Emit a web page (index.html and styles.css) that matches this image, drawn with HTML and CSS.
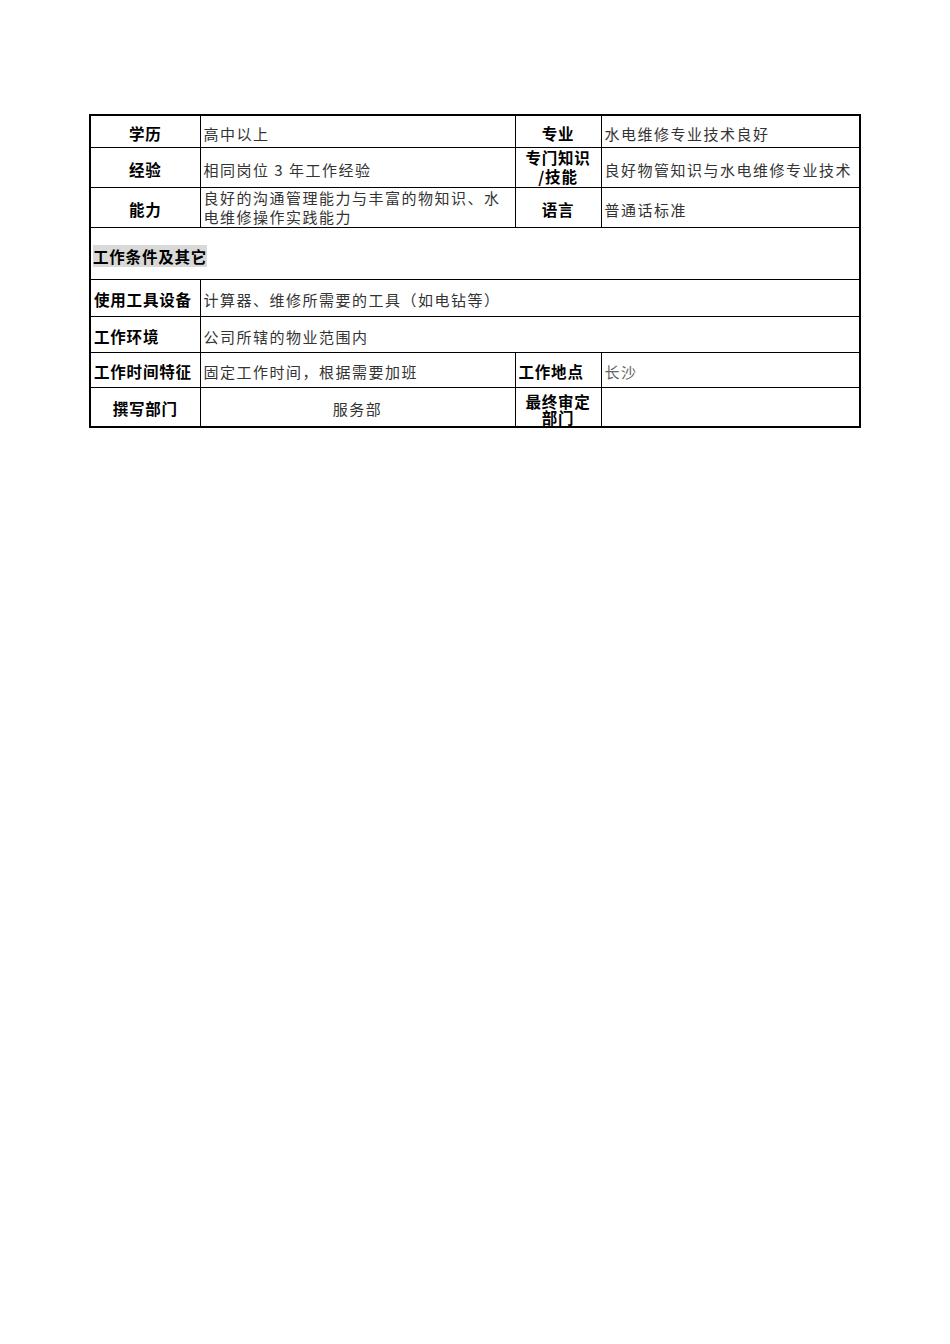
FILE: index.html
```html
<!DOCTYPE html>
<html lang="zh-CN">
<head>
<meta charset="utf-8">
<title>岗位说明书</title>
<link rel="stylesheet" href="styles.css">
</head>
<body>
<table class="sheet">
  <colgroup>
    <col class="c1"><col class="c2"><col class="c3"><col class="c4">
  </colgroup>
  <tr class="r1">
    <th class="lab center">学历</th>
    <td class="val">高中以上</td>
    <th class="lab center">专业</th>
    <td class="val">水电维修专业技术良好</td>
  </tr>
  <tr class="r2">
    <th class="lab center">经验</th>
    <td class="val">相同岗位 3 年工作经验</td>
    <th class="lab center two">专门知识<br>/技能</th>
    <td class="val">良好物管知识与水电维修专业技术</td>
  </tr>
  <tr class="r3">
    <th class="lab center">能力</th>
    <td class="val two">良好的沟通管理能力与丰富的物知识、水<br>电维修操作实践能力</td>
    <th class="lab center">语言</th>
    <td class="val">普通话标准</td>
  </tr>
  <tr class="r4">
    <th class="lab section" colspan="4"><span class="mark">工作条件及其它</span></th>
  </tr>
  <tr class="r5">
    <th class="lab">使用工具设备</th>
    <td class="val" colspan="3">计算器、维修所需要的工具（如电钻等）</td>
  </tr>
  <tr class="r6">
    <th class="lab">工作环境</th>
    <td class="val" colspan="3">公司所辖的物业范围内</td>
  </tr>
  <tr class="r7">
    <th class="lab">工作时间特征</th>
    <td class="val">固定工作时间，根据需要加班</td>
    <th class="lab">工作地点</th>
    <td class="val light">长沙</td>
  </tr>
  <tr class="r8">
    <th class="lab center">撰写部门</th>
    <td class="val center">服务部</td>
    <th class="lab center two tight">最终审定<br>部门</th>
    <td class="val"></td>
  </tr>
</table>
</body>
</html>
```

FILE: styles.css
```css
html, body {
  margin: 0;
  padding: 0;
  background: #ffffff;
}

body {
  padding: 114px 0 0 89px;
  font-family: "Noto Sans CJK SC", "Noto Sans", "Liberation Sans", sans-serif;
}

.sheet {
  border-collapse: collapse;
  table-layout: fixed;
  width: 770px;
  border: 2px solid #000;
}

.c1 { width: 110px; }
.c2 { width: 315px; }
.c3 { width: 86px; }
.c4 { width: 259px; }

.sheet th,
.sheet td {
  border: 1px solid #000;
  padding: 4px 3px 0 3px;
  vertical-align: middle;
  white-space: nowrap;
  overflow: hidden;
  line-height: 19px;
}

.lab {
  font-size: 15.5px;
  font-weight: 700;
  color: #000;
  text-align: left;
  letter-spacing: 0.8px;
}

.val {
  font-size: 15px;
  font-weight: 400;
  color: #333;
  text-align: left;
  letter-spacing: 1.5px;
}

.center { text-align: center; }

.sheet .two {
  padding-top: 0;
  line-height: 19px;
}

.sheet .tight {
  line-height: 16px;
  padding-top: 4px;
}

.light { color: #666; }

.r1 { height: 32px; }
.r2 { height: 40px; }
.r3 { height: 40px; }
.r4 { height: 52px; }
.r5 { height: 37px; }
.r6 { height: 36px; }
.r7 { height: 35px; }
.r8 { height: 40px; }

.sheet .section {
  padding-left: 2px;
  padding-top: 6px;
}

.mark {
  background: #d9d9d9;
  letter-spacing: 0.8px;
}
```
